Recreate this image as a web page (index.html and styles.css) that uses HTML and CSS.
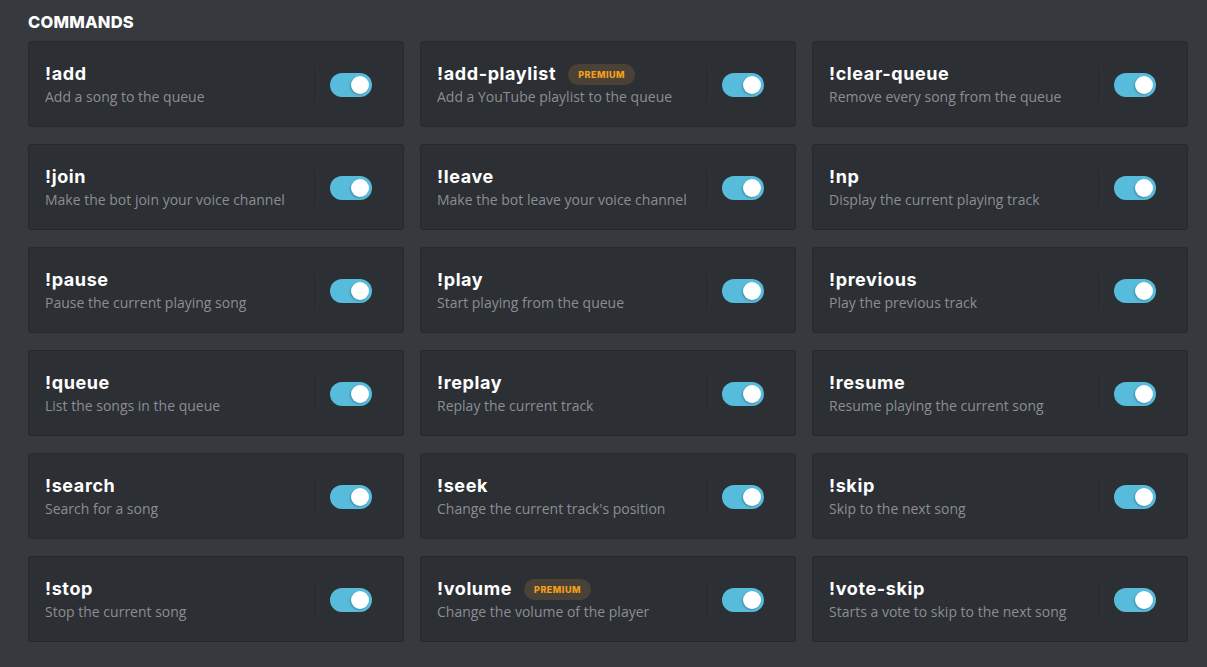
FILE: index.html
```html
<!DOCTYPE html>
<html>
<head>
<meta charset="utf-8">
<link rel="stylesheet" href="styles.css">
</head>
<body>
<div class="page">
  <h2 class="heading">COMMANDS</h2>
  <div class="grid">
    <div class="card"><div class="info"><div class="name">!add</div><div class="desc">Add a song to the queue</div></div><div class="ctrl"><span class="toggle"><span class="knob"></span></span></div></div>
    <div class="card"><div class="info"><div class="name">!add-playlist <span class="badge">PREMIUM</span></div><div class="desc">Add a YouTube playlist to the queue</div></div><div class="ctrl"><span class="toggle"><span class="knob"></span></span></div></div>
    <div class="card"><div class="info"><div class="name">!clear-queue</div><div class="desc">Remove every song from the queue</div></div><div class="ctrl"><span class="toggle"><span class="knob"></span></span></div></div>

    <div class="card"><div class="info"><div class="name">!join</div><div class="desc">Make the bot join your voice channel</div></div><div class="ctrl"><span class="toggle"><span class="knob"></span></span></div></div>
    <div class="card"><div class="info"><div class="name">!leave</div><div class="desc">Make the bot leave your voice channel</div></div><div class="ctrl"><span class="toggle"><span class="knob"></span></span></div></div>
    <div class="card"><div class="info"><div class="name">!np</div><div class="desc">Display the current playing track</div></div><div class="ctrl"><span class="toggle"><span class="knob"></span></span></div></div>

    <div class="card"><div class="info"><div class="name">!pause</div><div class="desc">Pause the current playing song</div></div><div class="ctrl"><span class="toggle"><span class="knob"></span></span></div></div>
    <div class="card"><div class="info"><div class="name">!play</div><div class="desc">Start playing from the queue</div></div><div class="ctrl"><span class="toggle"><span class="knob"></span></span></div></div>
    <div class="card"><div class="info"><div class="name">!previous</div><div class="desc">Play the previous track</div></div><div class="ctrl"><span class="toggle"><span class="knob"></span></span></div></div>

    <div class="card"><div class="info"><div class="name">!queue</div><div class="desc">List the songs in the queue</div></div><div class="ctrl"><span class="toggle"><span class="knob"></span></span></div></div>
    <div class="card"><div class="info"><div class="name">!replay</div><div class="desc">Replay the current track</div></div><div class="ctrl"><span class="toggle"><span class="knob"></span></span></div></div>
    <div class="card"><div class="info"><div class="name">!resume</div><div class="desc">Resume playing the current song</div></div><div class="ctrl"><span class="toggle"><span class="knob"></span></span></div></div>

    <div class="card"><div class="info"><div class="name">!search</div><div class="desc">Search for a song</div></div><div class="ctrl"><span class="toggle"><span class="knob"></span></span></div></div>
    <div class="card"><div class="info"><div class="name">!seek</div><div class="desc">Change the current track's position</div></div><div class="ctrl"><span class="toggle"><span class="knob"></span></span></div></div>
    <div class="card"><div class="info"><div class="name">!skip</div><div class="desc">Skip to the next song</div></div><div class="ctrl"><span class="toggle"><span class="knob"></span></span></div></div>

    <div class="card"><div class="info"><div class="name">!stop</div><div class="desc">Stop the current song</div></div><div class="ctrl"><span class="toggle"><span class="knob"></span></span></div></div>
    <div class="card"><div class="info"><div class="name">!volume <span class="badge">PREMIUM</span></div><div class="desc">Change the volume of the player</div></div><div class="ctrl"><span class="toggle"><span class="knob"></span></span></div></div>
    <div class="card"><div class="info"><div class="name">!vote-skip</div><div class="desc">Starts a vote to skip to the next song</div></div><div class="ctrl"><span class="toggle"><span class="knob"></span></span></div></div>
  </div>
</div>
</body>
</html>
```
FILE: styles.css
```css
html, body {
  margin: 0;
  padding: 0;
  background: #36393e;
  height: 100%;
  overflow: hidden;
}
.page {
  padding: 12px 19px 0 28px;
  font-family: "Open Sans", "Liberation Sans", sans-serif;
}
.heading {
  margin: 0 0 9px 0;
  font-family: Inter, "Liberation Sans", sans-serif;
  font-weight: 800;
  font-size: 16.5px;
  line-height: 20px;
  color: #ffffff;
  letter-spacing: 0.2px;
}
.grid {
  display: grid;
  grid-template-columns: repeat(3, 376px);
  column-gap: 16px;
  row-gap: 17px;
}
.card {
  box-sizing: border-box;
  height: 86px;
  background: #2c2f34;
  border: 1px solid #26282c;
  border-radius: 3px;
  display: flex;
  align-items: center;
  padding: 0 31px 0 16px;
}
.info {
  flex: 1;
  min-width: 0;
  padding-top: 2px;
}
.name {
  font-family: Inter, "Liberation Sans", sans-serif;
  font-weight: 700;
  font-size: 18px;
  line-height: 22px;
  letter-spacing: 0.6px;
  color: #ffffff;
  display: flex;
  align-items: center;
  gap: 12px;
}
.badge {
  display: inline-block;
  background: #4a4236;
  color: #f5a01a;
  font-size: 9px;
  font-weight: 800;
  line-height: 21px;
  height: 21px;
  padding: 0 10px;
  border-radius: 11px;
  letter-spacing: 0.5px;
}
.desc {
  margin-top: 2px;
  font-size: 14px;
  line-height: 20px;
  color: #8a8e93;
}
.ctrl {
  height: 36px;
  margin-top: 1px;
  border-left: 1px solid #26282c;
  padding-left: 15px;
  display: flex;
  align-items: center;
}
.toggle {
  position: relative;
  display: block;
  width: 42px;
  height: 24px;
  border-radius: 12px;
  background: #57bcdc;
}
.knob {
  position: absolute;
  top: 3px;
  right: 3px;
  width: 18px;
  height: 18px;
  border-radius: 50%;
  background: #ffffff;
  box-shadow: -1px 1px 2px rgba(0, 0, 0, 0.25);
}
```
